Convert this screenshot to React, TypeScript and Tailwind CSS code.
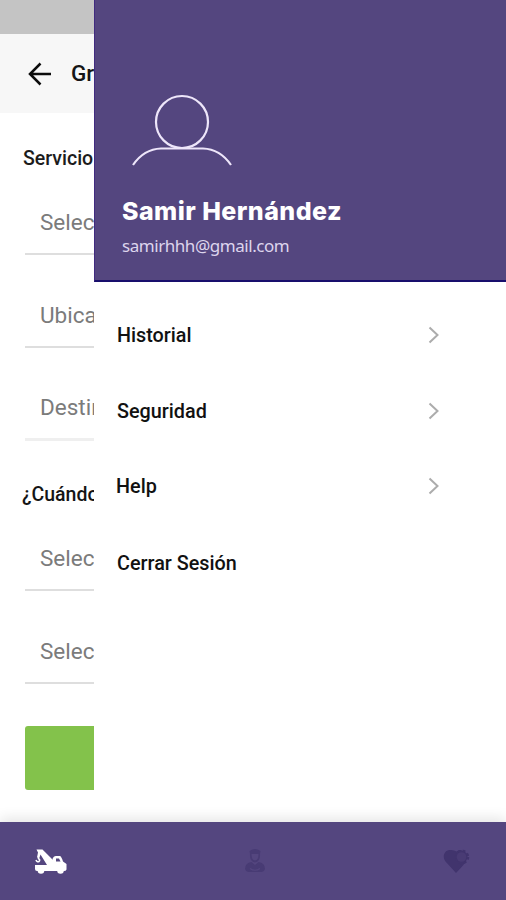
import React from 'react';

// Campurile formularului din spatele meniului
const Field = ({ label, line = 'border-b-2 border-[#dedede]' }: any) => (
    <div className={`ml-[25px] h-[93px] flex items-end pl-[15px] pb-[15px] text-[22.5px] leading-[32px] text-[#7b7b7b] whitespace-nowrap ${line}`}>
        {label}
    </div>
);

const BackArrow = () => (
    <svg className="shrink-0" width="24" height="24" viewBox="0 0 24 24" fill="none" stroke="#0c0c0c" strokeWidth="2.500">
        <path d="M12.500 1.500 L2 12 L12.500 22.500 M2 12 H23" />
    </svg>
);

const Chevron = () => (
    <svg className="-mt-[3px]" width="12" height="18" viewBox="0 0 12 18" fill="none" stroke="#acacac" strokeWidth="2">
        <path d="M1.5 1.5 L9.5 9 L1.5 16.5" />
    </svg>
);

const menuItems = [
    { label: 'Historial', arrow: true, box: 'h-[76px] pl-[23px]' },
    { label: 'Seguridad', arrow: true, box: 'h-[76px] pl-[23px]' },
    { label: 'Help', arrow: true, box: 'h-[74px] pl-[22px]' },
    { label: 'Cerrar Sesión', arrow: false, box: 'h-[80px] pl-[23px]' },
];

const TowTruck = () => (
    <svg width="34" height="28" viewBox="0 0 34 28" fill="#fff">
        {/* brat si carlig */}
        <path d="M2.500 2.500 H8.500 L20 14 V18 H13 L6.500 7.500 L5.500 10.500 H3 L4 5.500 Z" />
        <path d="M4.500 9.500 V11.500 Q6.500 13 5 14.500 Q3 15.500 2 13" fill="none" stroke="#fff" strokeWidth="1.600" />
        {/* caroserie */}
        <path d="M1 18 H18.500 V12 Q19.500 9 22 9 H26 Q27.500 9.500 29 14.500 L32.500 17 V22.500 Q32 24 30 24 H3 Q1 24 1 22 Z" />
        <circle cx="7" cy="23.500" r="3.300" />
        <circle cx="26.500" cy="23.500" r="3.300" />
        <path d="M22 11.500 H25 L26.500 14.500 H22 Z" fill="#54467f" />
    </svg>
);

const Driver = () => (
    <svg className="-ml-[2px]" width="22" height="26" viewBox="0 0 22 26" fill="#483b74">
        <path d="M5.500 3 Q11 -1 16.500 3 L16 6 H6 Z" />
        <path d="M6 6 Q5.500 14 11 14.500 Q16.500 14 16 6 L14.500 6 Q14.500 12 11 12.500 Q7.500 12 7.500 6 Z" />
        <path d="M1 21 Q1 15 7.500 14 L11 17 L14.500 14 Q21 15 21 21 Q20 24 17 24 H5 Q2 24 1 21 Z" />
        <path d="M6 20.500 Q11 24 16 20.500" fill="none" stroke="#54467f" strokeWidth="1.200" />
    </svg>
);

const HeartGear = () => (
    <svg width="28" height="26" viewBox="0 0 28 26">
        <path d="M13 25 L2.500 13.500 C-1 9 1 2.500 6.500 2 Q11 1.500 13.500 3.500 Q17 1 20 3 Q26 5 24 11 Q23 15 13 25 Z" fill="#41346d" />
        <circle cx="19" cy="9" r="6" fill="none" stroke="#41346d" strokeWidth="2.500" strokeDasharray="2.600 2.112" />
        <circle cx="18.500" cy="9" r="4.800" fill="#493b74" />
    </svg>
);

export default function App() {
    return (
        <div className="w-[506px] h-[900px] flex flex-col overflow-hidden bg-white font-['Roboto',sans-serif]">
            <div className="flex h-[822px]">
                {/* Pagina vizibila in stanga */}
                <div className="w-[94px] shrink-0 overflow-hidden">
                    <div className="h-[34px] bg-[#c4c4c4]"></div>
                    <div className="h-[79px] bg-[#f7f7f7] flex items-center pl-[28px]">
                        <BackArrow />
                        <span className="ml-[19px] text-[22.5px] font-medium text-[#151515]">Gr</span>
                    </div>
                    <div className="h-[49px] pl-[23px] pt-[31px] text-[19.5px] leading-[30px] font-medium text-[#1c1c1c] whitespace-nowrap">Servicio</div>
                    <Field label="Selec" />
                    <Field label="Ubica" />
                    <Field label="Destin" line="border-b-[3px] border-[#efefef]" />
                    <div className="h-[57px] pl-[22px] pt-[39px] text-[19.5px] leading-[30px] font-medium text-[#151515] whitespace-nowrap">¿Cuándo</div>
                    <Field label="Selec" />
                    <Field label="Selec" />
                    <div className="ml-[25px] mt-[42px] h-[64px] rounded-l-[3px] bg-[#83c24b]"></div>
                </div>

                {/* Meniul lateral */}
                <div className="flex-1">
                    <div className="h-[282px] bg-[#54467f] border-l border-b-2 border-l-[#412a80] border-b-[#180e6c] pt-[94px] pl-[27px]">
                        <svg className="ml-[9px]" width="104" height="74" viewBox="0 0 104 74" fill="none" stroke="#eee6fa" strokeWidth="2.200">
                            <circle cx="51" cy="28" r="26" />
                            <path d="M2 71 Q13 55 30 54.500 H72 Q89 55 100 71" />
                        </svg>
                        <div className="mt-[27px] h-[32px] text-[25px] leading-[32px] font-extrabold tracking-[0.45px] text-white whitespace-nowrap font-['Inter',sans-serif]">Samir Hernández</div>
                        <div className="mt-[6px] text-[17px] leading-[26px] tracking-[-0.45px] text-[#ddd5ed] whitespace-nowrap font-['Noto_Sans',sans-serif]">samirhhh@gmail.com</div>
                    </div>
                    <div className="pt-[16px]">
                        {menuItems.map((item) => (
                            <div key={item.label} className={`flex items-center justify-between pr-[66px] text-[19.8px] font-medium text-[#111] ${item.box}`}>
                                <span>{item.label}</span>
                                {item.arrow && <Chevron />}
                            </div>
                        ))}
                    </div>
                </div>
            </div>

            {/* Bara de navigare */}
            <div className="h-[78px] bg-[#54467f] flex items-center justify-between pl-[34px] pr-[35px] shadow-[0_-4px_12px_rgba(0,0,0,0.1)]">
                <TowTruck />
                <Driver />
                <HeartGear />
            </div>
        </div>
    );
}
